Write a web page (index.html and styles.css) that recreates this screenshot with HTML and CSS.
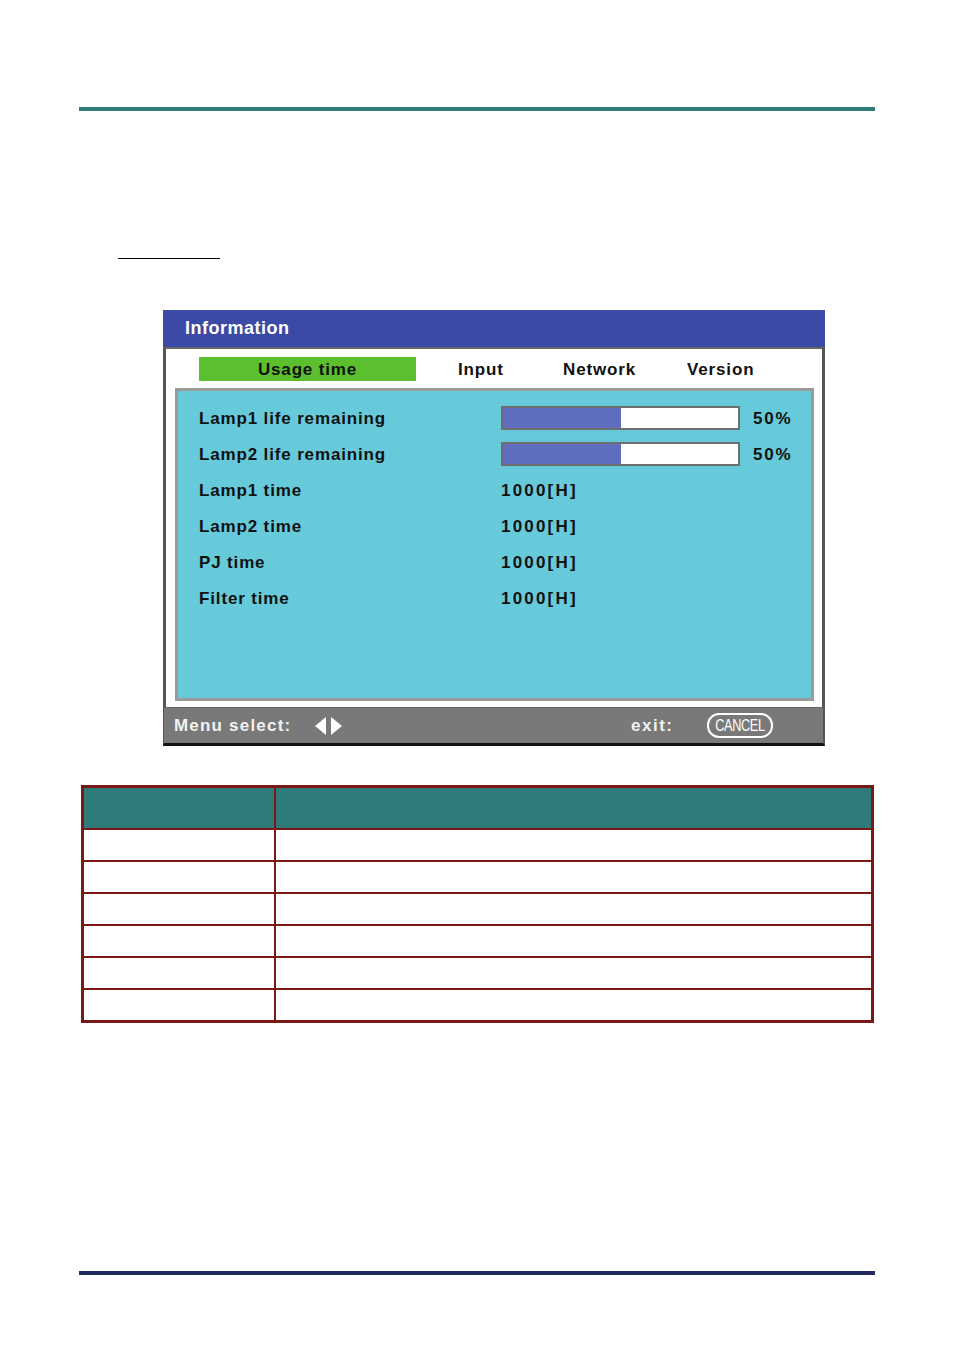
FILE: index.html
```html
<!DOCTYPE html>
<html>
<head>
<meta charset="utf-8">
<link rel="stylesheet" href="styles.css">
</head>
<body>
<div class="page">
  <div class="rule-top"></div>
  <div class="underline"></div>

  <div class="osd">
    <div class="osd-title">Information</div>
    <div class="osd-body">
      <div class="tabs">
        <div class="tab tab-active">Usage time</div>
        <div class="tab tab-input">Input</div>
        <div class="tab tab-network">Network</div>
        <div class="tab tab-version">Version</div>
      </div>
      <div class="panel">
        <div class="row">
          <div class="label">Lamp1 life remaining</div>
          <div class="bar"><div class="fill" style="width:50%"></div></div>
          <div class="pct">50%</div>
        </div>
        <div class="row">
          <div class="label">Lamp2 life remaining</div>
          <div class="bar"><div class="fill" style="width:50%"></div></div>
          <div class="pct">50%</div>
        </div>
        <div class="row">
          <div class="label">Lamp1 time</div>
          <div class="value">1000[H]</div>
        </div>
        <div class="row">
          <div class="label">Lamp2 time</div>
          <div class="value">1000[H]</div>
        </div>
        <div class="row">
          <div class="label">PJ time</div>
          <div class="value">1000[H]</div>
        </div>
        <div class="row">
          <div class="label">Filter time</div>
          <div class="value">1000[H]</div>
        </div>
      </div>
    </div>
    <div class="osd-footer">
      <span class="menu-select">Menu select:</span>
      <svg class="arrows" width="30" height="20" viewBox="0 0 30 20">
        <polygon points="12,1 12,19 1,10" fill="#ffffff"/>
        <polygon points="17,1 17,19 28,10" fill="#ffffff"/>
      </svg>
      <span class="exit">exit:</span>
      <span class="cancel"><span class="cancel-text">CANCEL</span></span>
    </div>
  </div>

  <table class="grid">
    <tr class="head"><td class="c1"></td><td class="c2"></td></tr>
    <tr><td class="c1"></td><td class="c2"></td></tr>
    <tr><td class="c1"></td><td class="c2"></td></tr>
    <tr><td class="c1"></td><td class="c2"></td></tr>
    <tr><td class="c1"></td><td class="c2"></td></tr>
    <tr><td class="c1"></td><td class="c2"></td></tr>
    <tr><td class="c1"></td><td class="c2"></td></tr>
  </table>

  <div class="rule-bottom"></div>
</div>
</body>
</html>
```

FILE: styles.css
```css
html, body {
  margin: 0;
  padding: 0;
  background: #ffffff;
}
.page {
  width: 954px;
  height: 1350px;
  overflow: hidden;
  display: flex;
  flex-direction: column;
  font-family: "Liberation Sans", Arial, sans-serif;
}
.rule-top {
  margin-top: 107px;
  margin-left: 79px;
  width: 796px;
  height: 4px;
  background: #2e7b79;
}
.underline {
  margin-top: 147px;
  margin-left: 118px;
  width: 102px;
  height: 1px;
  background: #000000;
}
.osd {
  margin-top: 51px;
  margin-left: 163px;
  width: 662px;
  display: flex;
  flex-direction: column;
  font-weight: bold;
  letter-spacing: 0.85px;
  font-size: 17px;
}
.osd-title {
  height: 37px;
  background: #3a4aa6;
  color: #ffffff;
  font-size: 18px;
  letter-spacing: 0.5px;
  line-height: 37px;
  padding-left: 22px;
  box-sizing: border-box;
}
.osd-body {
  background: #ffffff;
  border-top: 2px solid #666666;
  border-left: 3px solid #555555;
  border-right: 3px solid #555555;
  padding-bottom: 6px;
}
.tabs {
  height: 39px;
  display: flex;
  align-items: center;
  color: #111111;
}
.tab {
  height: 24px;
  line-height: 26px;
}
.tab-active {
  margin-left: 33px;
  width: 217px;
  background: #5cbf2e;
  text-align: center;
}
.tab-input {
  margin-left: 42px;
  width: 105px;
}
.tab-network {
  width: 124px;
}
.panel {
  margin-left: 9px;
  margin-right: 8px;
  height: 313px;
  box-sizing: border-box;
  border: 3px solid #9a9a9a;
  background: #66cadb;
  padding-top: 9px;
  padding-left: 21px;
  color: #111111;
}
.row {
  height: 36px;
  display: flex;
  align-items: center;
}
.label {
  width: 302px;
  padding-top: 2px;
}
.value {
  letter-spacing: 2.2px;
  padding-top: 2px;
}
.bar {
  width: 239px;
  height: 24px;
  box-sizing: border-box;
  border: 2px solid #6e6e6e;
  background: #ffffff;
}
.fill {
  height: 100%;
  background: #5f6dbf;
}
.pct {
  margin-left: 13px;
  letter-spacing: 1.8px;
  padding-top: 2px;
}
.osd-footer {
  height: 35px;
  background: #797979;
  border-top: 1px solid #666666;
  border-bottom: 3px solid #111111;
  border-left: 1px solid #555555;
  border-right: 2px solid #555555;
  display: flex;
  align-items: center;
  color: #f2f2f2;
}
.menu-select {
  margin-left: 10px;
  width: 140px;
  letter-spacing: 1.2px;
  padding-top: 1px;
}
.arrows {
  width: 30px;
  margin-top: 1px;
}
.exit {
  margin-left: 287px;
  width: 76px;
  letter-spacing: 1.5px;
  padding-top: 1px;
}
.cancel {
  width: 66px;
  height: 25px;
  box-sizing: border-box;
  border: 2px solid #ffffff;
  border-radius: 12px;
  display: flex;
  align-items: center;
  justify-content: center;
}
.cancel-text {
  display: inline-block;
  font-weight: normal;
  font-size: 17px;
  letter-spacing: -0.5px;
  transform: scaleX(0.75);
  color: #ffffff;
}
.grid {
  margin-top: 39px;
  margin-left: 81px;
  width: 793px;
  border-collapse: collapse;
  border: 3px solid #7a1818;
}
.grid td {
  border: 2px solid #7a1818;
  height: 30px;
  padding: 0;
}
.grid .head td {
  background: #2e7b79;
  height: 40px;
}
.grid .c1 {
  width: 190px;
}
.rule-bottom {
  margin-top: 248px;
  margin-left: 79px;
  width: 796px;
  height: 4px;
  background: #222a62;
}
```
